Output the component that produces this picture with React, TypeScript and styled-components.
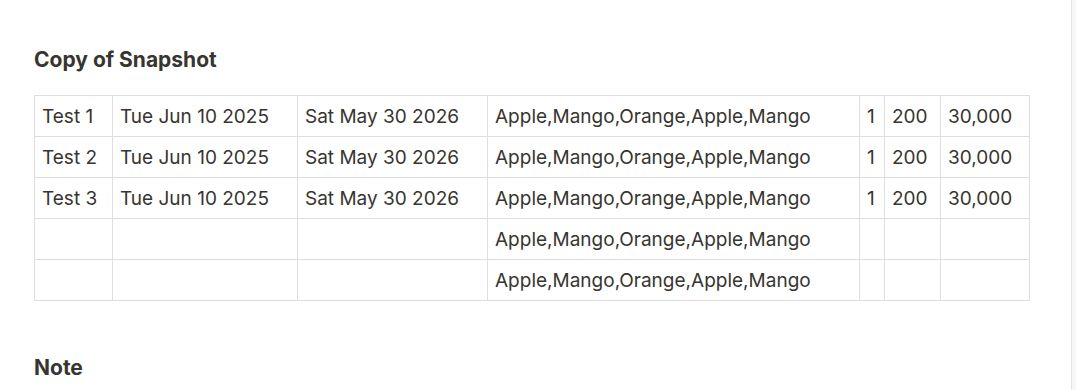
import styled, { createGlobalStyle } from 'styled-components';

const GlobalStyle = createGlobalStyle`
  html, body {
    margin: 0;
    padding: 0;
    background: #ffffff;
  }
  body {
    font-family: Inter, "Noto Sans", sans-serif;
    color: #37352f;
  }
`;

type Row = {
  name: string;
  start: string;
  end: string;
  fruits: string;
  qty: string;
  price: string;
  total: string;
};

const rows: Row[] = [
  { name: 'Test 1', start: 'Tue Jun 10 2025', end: 'Sat May 30 2026', fruits: 'Apple,Mango,Orange,Apple,Mango', qty: '1', price: '200', total: '30,000' },
  { name: 'Test 2', start: 'Tue Jun 10 2025', end: 'Sat May 30 2026', fruits: 'Apple,Mango,Orange,Apple,Mango', qty: '1', price: '200', total: '30,000' },
  { name: 'Test 3', start: 'Tue Jun 10 2025', end: 'Sat May 30 2026', fruits: 'Apple,Mango,Orange,Apple,Mango', qty: '1', price: '200', total: '30,000' },
  { name: '', start: '', end: '', fruits: 'Apple,Mango,Orange,Apple,Mango', qty: '', price: '', total: '' },
  { name: '', start: '', end: '', fruits: 'Apple,Mango,Orange,Apple,Mango', qty: '', price: '', total: '' },
];

// column widths incl. the left border line
const widths = [78, 185, 190, 372, 25, 56, 89];

export default function App() {
  return (
    <>
      <GlobalStyle />
      <PageStyled>
        <Main>
          <Heading>Copy of Snapshot</Heading>
          <Table>
            <colgroup>
              {widths.map((w, i) => (
                <col key={i} style={{ width: w }} />
              ))}
            </colgroup>
            <tbody>
              {rows.map((row, index) => (
                <tr key={index}>
                  <Cell>{row.name}</Cell>
                  <Cell>{row.start}</Cell>
                  <Cell>{row.end}</Cell>
                  <Cell>{row.fruits}</Cell>
                  <Cell>{row.qty}</Cell>
                  <Cell>{row.price}</Cell>
                  <Cell>{row.total}</Cell>
                </tr>
              ))}
            </tbody>
          </Table>
          <NoteHeading>Note</NoteHeading>
        </Main>
        <ScrollTrack />
      </PageStyled>
    </>
  );
}

const PageStyled = styled.div`
  display: flex;
  width: 1076px;
  height: 390px;
  overflow: hidden;
`;

const Main = styled.main`
  flex: 1;
  padding: 46px 0 0 34px;
`;

const Heading = styled.h2`
  margin: 0;
  font-size: 21px;
  font-weight: 700;
  line-height: 28px;
  color: #37352f;
`;

const NoteHeading = styled(Heading)`
  margin-top: 53px;
`;

const Table = styled.table`
  margin-top: 21px;
  border-collapse: collapse;
  table-layout: fixed;
  width: 996px;
`;

const Cell = styled.td`
  height: 41px;
  padding: 0 7px;
  border: 1px solid #dedede;
  font-size: 19px;
  color: #37352f;
  white-space: nowrap;
  overflow: hidden;
  box-sizing: border-box;
`;

const ScrollTrack = styled.div`
  width: 4px;
  border-left: 1px solid #e6e6e6;
  background: #f7f7f7;
`;
